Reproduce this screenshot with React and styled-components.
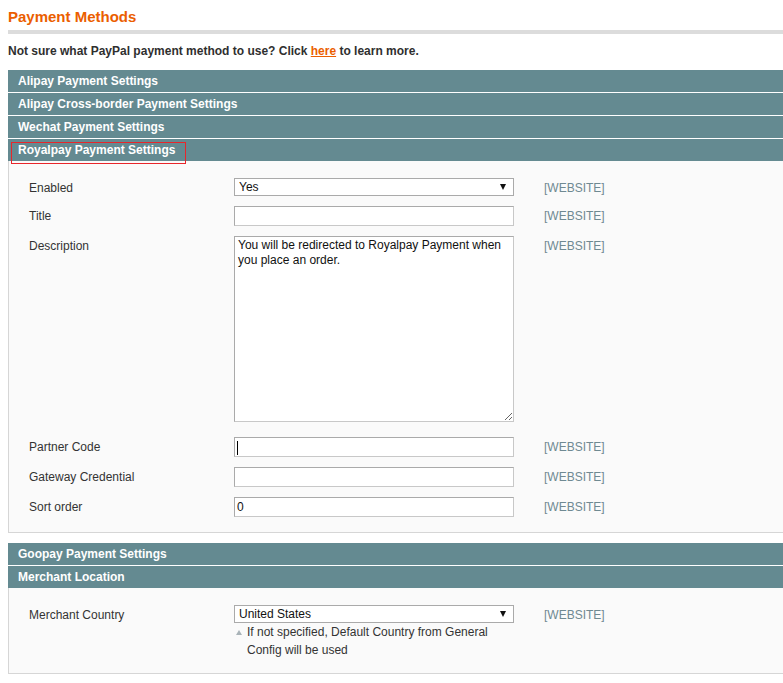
import React from "react";
import styled, { createGlobalStyle } from "styled-components";

const GlobalStyle = createGlobalStyle`
  html, body {
    margin: 0;
    padding: 0;
    background: #fff;
    overflow: hidden;
  }
  body {
    font-family: "Liberation Sans", Arial, sans-serif;
    font-size: 12px;
    color: #2f2f2f;
  }
`;

const Page = styled.div`
  width: 840px;
  padding-left: 8px;
`;

const PageTitle = styled.h3`
  margin: 0;
  padding-top: 8px;
  font-size: 15px;
  line-height: 18px;
  font-weight: bold;
  color: #eb5e00;
`;

const TitleRule = styled.div`
  height: 4px;
  margin-top: 4px;
  background: #dcdcdc;
`;

const Notice = styled.p`
  margin: 8px 0 10px;
  font-weight: bold;
  line-height: 18px;
  color: #2f2f2f;
`;

const HelpLink = styled.a`
  color: #eb5e00;
  text-decoration: underline;
`;

const SectionHead = styled.div`
  position: relative;
  height: 22px;
  line-height: 22px;
  padding-left: 10px;
  margin-bottom: ${(p) => (p.$open ? 0 : 1)}px;
  background: #648a91;
  color: #fff;
  font-weight: bold;
  font-size: 12px;

  ${(p) =>
    p.$marked &&
    `
    &::after {
      content: "";
      position: absolute;
      left: 3px;
      top: 3px;
      width: 173px;
      height: 20px;
      border: 1px solid #e8262b;
      z-index: 2;
    }
  `}
`;

const Fieldset = styled.div`
  border: 1px solid #d6d6d6;
  border-top: 0;
  background: #fafafa;
  padding: 17px 0 ${(p) => p.$bottom || 15}px 20px;
  margin-bottom: 10px;
  display: flex;
  flex-direction: column;
  gap: 10px;
`;

const Row = styled.div`
  display: grid;
  grid-template-columns: 205px 280px 1fr;
  align-items: start;
  margin-bottom: ${(p) => p.$tail || 0}px;
`;

const Label = styled.div`
  line-height: 18px;
  padding-top: 1px;
  margin-bottom: -1px;
  color: #333;
`;

const Scope = styled.div`
  line-height: 18px;
  padding-top: 1px;
  margin-bottom: -1px;
  padding-left: 30px;
  color: #6f8992;
`;

const Value = styled.div`
  display: flex;
  flex-direction: column;
`;

const SelectWrap = styled.div`
  position: relative;
  width: 280px;

  &::after {
    content: "";
    position: absolute;
    right: 8px;
    top: 6px;
    border-left: 3px solid transparent;
    border-right: 3px solid transparent;
    border-top: 6px solid #111;
    pointer-events: none;
  }
`;

const Select = styled.select`
  appearance: none;
  -webkit-appearance: none;
  display: block;
  box-sizing: border-box;
  width: 280px;
  height: 18px;
  margin: 0;
  padding: 0 0 0 4px;
  border: 1px solid #aaa;
  border-radius: 0;
  background: #fff;
  font-family: "Liberation Sans", Arial, sans-serif;
  font-size: 12px;
  line-height: 16px;
  color: #111;
  outline: none;
`;

const InputWrap = styled.div`
  position: relative;
  width: 280px;

  ${(p) =>
    p.$caret &&
    `
    &::after {
      content: "";
      position: absolute;
      left: 3px;
      top: 4px;
      width: 1px;
      height: 14px;
      background: #000;
    }
  `}
`;

const Input = styled.input`
  display: block;
  box-sizing: border-box;
  width: 280px;
  height: 20px;
  margin: 0;
  padding: 0 2px;
  border: 1px solid #aaa;
  border-right-color: #c8c8c8;
  border-bottom-color: #c8c8c8;
  border-radius: 0;
  background: #fff;
  font-family: "Liberation Sans", Arial, sans-serif;
  font-size: 12px;
  color: #111;
  outline: none;
`;

const TextArea = styled.textarea`
  display: block;
  box-sizing: border-box;
  width: 280px;
  height: 186px;
  margin: 0;
  padding: 1px 3px;
  border: 1px solid #aaa;
  border-right-color: #c8c8c8;
  border-bottom-color: #c8c8c8;
  border-radius: 0;
  background: #fff;
  font-family: "Liberation Sans", Arial, sans-serif;
  font-size: 12px;
  line-height: 15px;
  color: #111;
  outline: none;
`;

const Note = styled.p`
  position: relative;
  margin: 0;
  padding-left: 13px;
  line-height: 18px;
  color: #333;

  &::before {
    content: "";
    position: absolute;
    left: 2px;
    top: 7px;
    border-left: 3px solid transparent;
    border-right: 3px solid transparent;
    border-bottom: 5px solid #a9b3b8;
  }
`;

const sectionsBefore = [
  "Alipay Payment Settings",
  "Alipay Cross-border Payment Settings",
  "Wechat Payment Settings",
];

const App = () => {
  return (
    <Page>
      <GlobalStyle />
      <PageTitle>Payment Methods</PageTitle>
      <TitleRule />
      <Notice>
        Not sure what PayPal payment method to use? Click{" "}
        <HelpLink href="#">here</HelpLink> to learn more.
      </Notice>

      {sectionsBefore.map((name) => (
        <SectionHead key={name}>{name}</SectionHead>
      ))}

      <SectionHead $open $marked>
        Royalpay Payment Settings
      </SectionHead>
      <Fieldset>
        <Row>
          <Label>Enabled</Label>
          <SelectWrap>
            <Select defaultValue="1">
              <option value="1">Yes</option>
              <option value="0">No</option>
            </Select>
          </SelectWrap>
          <Scope>[WEBSITE]</Scope>
        </Row>
        <Row>
          <Label>Title</Label>
          <InputWrap>
            <Input type="text" defaultValue="" />
          </InputWrap>
          <Scope>[WEBSITE]</Scope>
        </Row>
        <Row $tail={5}>
          <Label>Description</Label>
          <TextArea defaultValue="You will be redirected to Royalpay Payment when you place an order." />
          <Scope>[WEBSITE]</Scope>
        </Row>
        <Row>
          <Label>Partner Code</Label>
          <InputWrap $caret>
            <Input type="text" defaultValue="" />
          </InputWrap>
          <Scope>[WEBSITE]</Scope>
        </Row>
        <Row>
          <Label>Gateway Credential</Label>
          <InputWrap>
            <Input type="text" defaultValue="" />
          </InputWrap>
          <Scope>[WEBSITE]</Scope>
        </Row>
        <Row>
          <Label>Sort order</Label>
          <InputWrap>
            <Input type="text" defaultValue="0" />
          </InputWrap>
          <Scope>[WEBSITE]</Scope>
        </Row>
      </Fieldset>

      <SectionHead>Goopay Payment Settings</SectionHead>
      <SectionHead $open>Merchant Location</SectionHead>
      <Fieldset $bottom={14}>
        <Row>
          <Label>Merchant Country</Label>
          <Value>
            <SelectWrap>
              <Select defaultValue="US">
                <option value="US">United States</option>
              </Select>
            </SelectWrap>
            <Note>
              If not specified, Default Country from General Config will be
              used
            </Note>
          </Value>
          <Scope>[WEBSITE]</Scope>
        </Row>
      </Fieldset>
    </Page>
  );
};

export default App;
